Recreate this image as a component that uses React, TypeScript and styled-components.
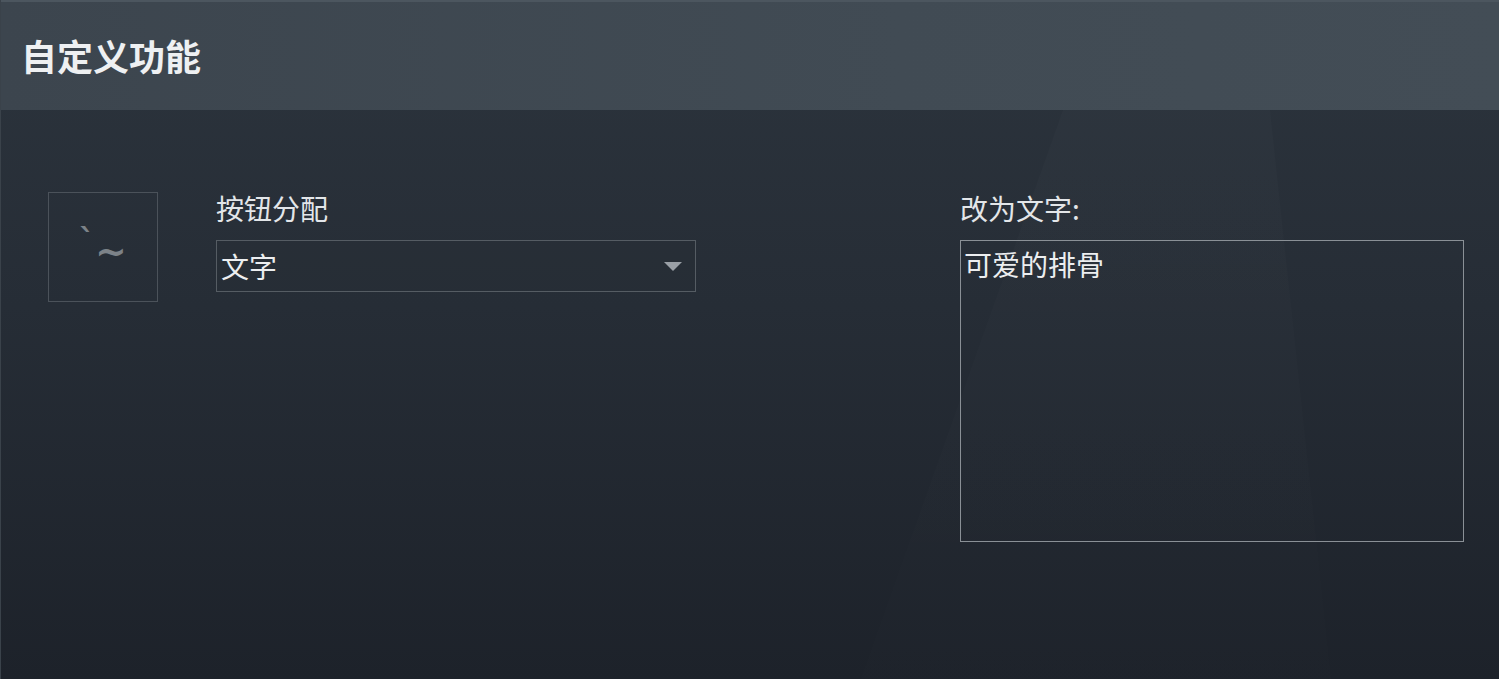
import React from "react";
import styled, { createGlobalStyle } from "styled-components";

const Global = createGlobalStyle`
  html, body { margin: 0; padding: 0; width: 100%; height: 100%; overflow: hidden; }
  body { font-family: "Noto Sans CJK SC", "Noto Sans", sans-serif; background: #1c2129; }
  #root { width: 100%; height: 100%; }
`;

const Page = styled.div`
  width: 1499px;
  height: 679px;
  display: flex;
  flex-direction: column;
  background: linear-gradient(180deg, #2c343d 0%, #262d36 45%, #1d222a 100%);
  border-left: 1px solid #3a424a;
  box-sizing: border-box;
  position: relative;
  overflow: hidden;
`;

const Beam = styled.div`
  position: absolute;
  top: 110px;
  left: 860px;
  width: 470px;
  height: 569px;
  background: linear-gradient(180deg, rgba(255,255,255,0.014), rgba(255,255,255,0.004));
  clip-path: polygon(43% 0, 87% 0, 100% 100%, 0 100%);
  pointer-events: none;
`;

const Header = styled.header`
  height: 110px;
  flex: 0 0 110px;
  box-sizing: border-box;
  border-top: 2px solid #4c565f;
  background: linear-gradient(90deg, #3c454e 0%, #414b54 60%, #434d56 100%);
  display: flex;
  align-items: center;
  padding-left: 20px;
  padding-bottom: 2px;
`;

const Title = styled.h1`
  margin: 0;
  font-size: 36px;
  font-weight: 700;
  color: #eef0f2;
`;

const Content = styled.main`
  display: flex;
  align-items: flex-start;
  padding: 78px 0 0 47px;
  position: relative;
`;

const KeyBox = styled.div`
  width: 110px;
  height: 110px;
  box-sizing: border-box;
  border: 1px solid #4b525a;
  margin-top: 4px;
  display: flex;
  align-items: center;
  justify-content: center;
  color: #7c8288;
  font-family: "DejaVu Sans", sans-serif;
  font-weight: 700;
`;

const Glyph = styled.span<{ $size: number; $shift: number }>`
  font-size: ${(p) => p.$size}px;
  line-height: 1;
  transform: translateY(${(p) => p.$shift}px);
`;

const Column = styled.div<{ $width: number; $left: number }>`
  width: ${(p) => p.$width}px;
  margin-left: ${(p) => p.$left}px;
  display: flex;
  flex-direction: column;
`;

const Label = styled.div`
  height: 40px;
  line-height: 40px;
  font-size: 28px;
  color: #e3e6e9;
  margin-bottom: 12px;
  white-space: nowrap;
`;

const Select = styled.div`
  height: 52px;
  box-sizing: border-box;
  border: 1px solid #555c63;
  background: rgba(40, 46, 54, 0.35);
  display: flex;
  align-items: center;
  justify-content: space-between;
  padding: 0 13px 0 4px;
  font-size: 28px;
  color: #eceef0;
`;

const TextArea = styled.div`
  height: 302px;
  box-sizing: border-box;
  border: 1px solid #8a9096;
  padding: 6px 3px;
  line-height: 34px;
  font-size: 28px;
  color: #eceef0;
`;

export default function App() {
  return (
    <>
      <Global />
      <Page>
        <Beam />
        <Header>
          <Title>自定义功能</Title>
        </Header>
        <Content>
          <KeyBox>
            <Glyph $size={32} $shift={-6}>`</Glyph>
            <Glyph $size={38} $shift={4}>~</Glyph>
          </KeyBox>
          <Column $width={480} $left={58}>
            <Label>按钮分配</Label>
            <Select>
              <span>文字</span>
              <svg width="18" height="9" viewBox="0 0 18 9">
                <polygon points="0,0 18,0 9,9" fill="#9aa0a6" />
              </svg>
            </Select>
          </Column>
          <Column $width={504} $left={264}>
            <Label>改为文字:</Label>
            <TextArea>可爱的排骨</TextArea>
          </Column>
        </Content>
      </Page>
    </>
  );
}
